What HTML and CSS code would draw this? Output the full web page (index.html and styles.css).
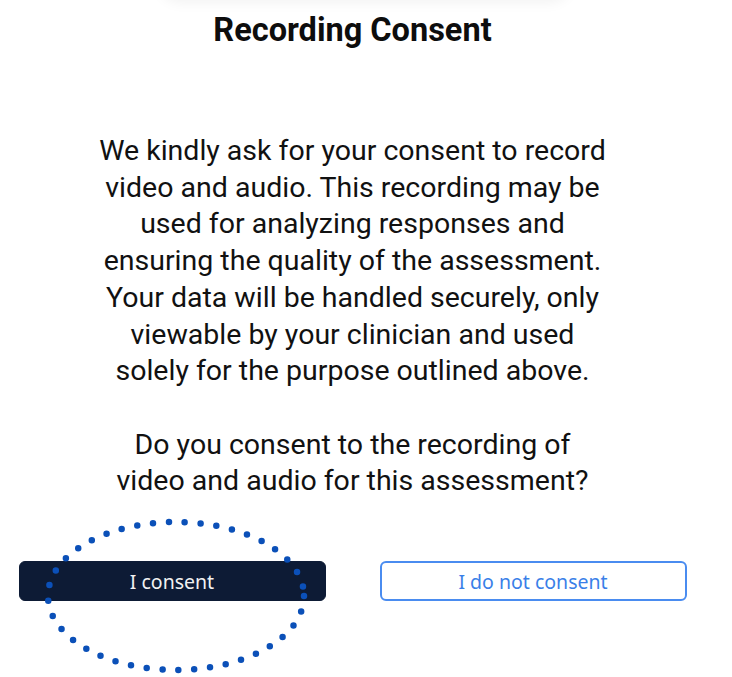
FILE: index.html
```html
<!DOCTYPE html>
<html>
<head>
<meta charset="utf-8">
<link rel="stylesheet" href="styles.css">
</head>
<body>
<div class="page">
  <div class="top-shadow"></div>
  <h1 class="title">Recording Consent</h1>
  <div class="body-text">
    <p>We kindly ask for your consent to record video and audio. This recording may be used for analyzing responses and ensuring the quality of the assessment. Your data will be handled securely, only viewable by your clinician and used solely for the purpose outlined above.</p>
    <p>Do you consent to the recording of video and audio for this assessment?</p>
  </div>
  <div class="actions">
    <div class="btn-wrap">
      <button class="btn btn-primary">I consent</button>
      <svg class="focus-ring" width="270" height="160" viewBox="0 0 270 160">
        <ellipse cx="135" cy="80" rx="128" ry="74" fill="none" stroke="#0b50b8" stroke-width="6.5" stroke-linecap="round" stroke-dasharray="0 15.9"/>
      </svg>
    </div>
    <button class="btn btn-outline">I do not consent</button>
  </div>
</div>
</body>
</html>
```
FILE: styles.css
```css
html, body {
  margin: 0;
  padding: 0;
  background: #ffffff;
}
.page {
  position: relative;
  width: 705px;
  height: 677px;
  overflow: hidden;
  font-family: Roboto, "Liberation Sans", sans-serif;
  color: #111;
}
.top-shadow {
  position: absolute;
  left: 160px;
  top: -40px;
  width: 410px;
  height: 40px;
  border-radius: 30px;
  box-shadow: 0 2px 14px rgba(0,0,0,0.06);
  background: #fff;
}
.title {
  margin: 0;
  padding-top: 10px;
  font-size: 32.5px;
  font-weight: 700;
  line-height: 40px;
  text-align: center;
  color: #0d0d0d;
}
.body-text {
  width: 507px;
  margin: 83px auto 0;
  text-align: center;
  font-size: 28.5px;
  line-height: 36.7px;
}
.body-text p {
  margin: 0 0 36.7px;
}
.body-text p:last-child {
  margin-bottom: 0;
}
.actions {
  display: flex;
  justify-content: center;
  gap: 54px;
  margin-top: 61px;
}
.btn-wrap {
  position: relative;
}
.btn {
  width: 307px;
  height: 40px;
  border-radius: 6px;
  font-family: "Noto Sans", "Open Sans", sans-serif;
  font-size: 19.5px;
  padding: 0;
  box-sizing: border-box;
}
.btn-primary {
  background: #0d1b35;
  color: #f2f2f2;
  border: 1px solid #0d1b35;
}
.btn-outline {
  background: #fff;
  color: #3a7fe8;
  border: 2px solid #4a8cf0;
}
.focus-ring {
  position: absolute;
  left: 22px;
  top: -45px;
  pointer-events: none;
}
```
